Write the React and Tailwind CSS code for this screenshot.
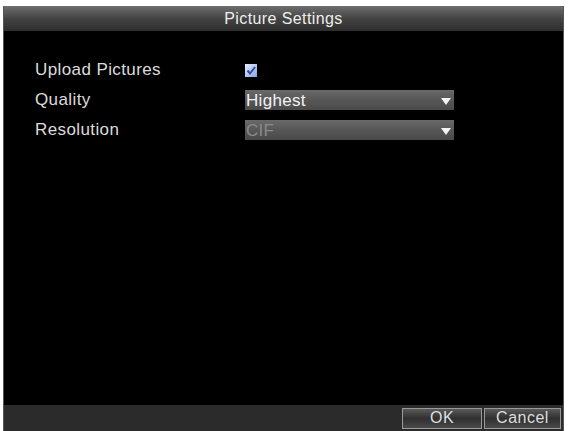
import React from 'react';

const font = { fontFamily: '"Liberation Sans", Arial, sans-serif' };

function Dropdown({ value, disabled }) {
  return (
    <div className="flex h-[20px] w-[209px] items-center justify-between bg-gradient-to-b from-[#6a6a6a] via-[#575757] to-[#4a4a4a] pl-[1px] pr-[3px]">
      <span className={`text-[17px] leading-none tracking-[0.3px] ${disabled ? 'text-[#8a8a8a]' : 'text-[#f2f2f2]'}`}>
        {value}
      </span>
      <svg className="mt-[3px]" width="10" height="7" viewBox="0 0 10 7">
        <polygon points="0,0 10,0 5,7" fill="#f4f4f4" />
      </svg>
    </div>
  );
}

function Button({ children, width }) {
  return (
    <div
      className={`flex h-[21px] ${width} items-center justify-center border border-[#9a9a9a] bg-gradient-to-b from-[#5a5a5a] via-[#303030] to-[#4a4a4a] text-[16px] leading-none tracking-[0.5px] text-[#dedede]`}
    >
      {children}
    </div>
  );
}

export default function App() {
  return (
    <div className="h-[431px] w-[568px] bg-white pl-[3px] pr-[4px] pt-[6px]" style={font}>
      <div className="flex h-[425px] flex-col border-x border-[#555] bg-black">
        <div className="flex h-[25px] items-center justify-center bg-gradient-to-b from-[#6e6e6e] via-[#444] to-[#2e2e2e] text-[16px] tracking-[0.4px] text-[#eeeeee]">
          Picture Settings
        </div>
        <div className="flex flex-1 flex-col gap-[10px] pl-[31px] pt-[29px] text-[17px] tracking-[0.4px] text-[#dcdcdc]">
          <div className="flex h-[20px] items-center">
            <span className="w-[210px]">Upload Pictures</span>
            <div className="relative h-[13px] w-[12px] bg-gradient-to-br from-[#e8eeff] to-[#8aa4e0]">
              <svg className="absolute left-0 top-0" width="12" height="13" viewBox="0 0 12 13">
                <path d="M2.5 6.5 L5 9.5 L10 3" stroke="#2c4fb0" strokeWidth="2" fill="none" />
              </svg>
            </div>
          </div>
          <div className="flex h-[20px] items-center">
            <span className="w-[210px]">Quality</span>
            <Dropdown value="Highest" />
          </div>
          <div className="flex h-[20px] items-center">
            <span className="w-[210px]">Resolution</span>
            <Dropdown value="CIF" disabled />
          </div>
        </div>
        <div className="flex h-[26px] items-center justify-end gap-[2px] bg-[#2b2b2b] pr-[2px]">
          <Button width="w-[80px]">OK</Button>
          <Button width="w-[77px]">Cancel</Button>
        </div>
      </div>
    </div>
  );
}
